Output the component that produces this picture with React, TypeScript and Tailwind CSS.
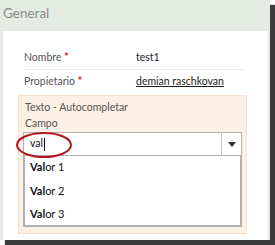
import React from "react";

const font = { fontFamily: 'Lato, "Open Sans", sans-serif' };

export default function App() {
  return (
    <div className="w-[275px] h-[245px] bg-white overflow-hidden" style={font}>
      <div className="w-[270px] h-[240px] bg-[#e4ebe3] shadow-[5px_5px_1px_#3c3c3c] flex flex-col">
        <div className="h-[31px] pl-[3px] pt-[4px] text-[13.5px] text-[#8c8c8c] leading-[18px]">General</div>
        <div className="flex-1 ml-[3px] mr-[2px] bg-white pt-[15px] flex flex-col">
          <div className="ml-[20px] w-[222px] flex flex-col text-[10.5px]">
            <div className="h-[24px] flex items-center border-b border-[#ececec]">
              <div className="w-[113px] pl-[1px] text-[#555]">
                Nombre <span className="text-[#e00] font-bold">*</span>
              </div>
              <div className="text-[#1e1e1e]">test1</div>
            </div>
            <div className="h-[24px] flex items-center">
              <div className="w-[113px] pl-[1px] text-[#555]">
                Propietario <span className="text-[#e00] font-bold">*</span>
              </div>
              <div className="text-[#1e1e1e] underline">demian raschkovan</div>
            </div>
          </div>
          <div className="ml-[15px] w-[229px] h-[139px] mt-[1px] bg-[#fcefe3] border border-[#f6dec7] px-[4px] pt-[3px] flex flex-col text-[10.5px]">
            <div className="pl-[2px] text-[#555] leading-[16px]">Texto - Autocompletar</div>
            <div className="pl-[2px] text-[#555] leading-[16px]">Campo</div>
            <div className="relative mt-[1px]">
              <div className="h-[24px] bg-white border border-[#b4b4b4] flex">
                <div className="flex-1 flex items-center pl-[6px] text-[#111]">
                  val<span className="inline-block w-[1px] h-[13px] bg-black ml-[1px]"></span>
                </div>
                <div className="w-[20px] border-l border-[#c8c8c8] flex items-center justify-center">
                  <svg width="8" height="5" viewBox="0 0 8 5">
                    <polygon points="0,0 8,0 4,5" fill="#333" />
                  </svg>
                </div>
              </div>
              <div className="h-[71px] bg-white border-2 border-t-0 border-[#b0b0b0] flex flex-col pl-[5px] text-[#111] text-[11px]">
                <div className="h-[24px] flex items-center"><span className="font-bold">Val</span>or 1</div>
                <div className="h-[24px] flex items-center"><span className="font-bold">Val</span>or 2</div>
                <div className="h-[23px] flex items-center"><span className="font-bold">Val</span>or 3</div>
              </div>
              <svg className="absolute left-[-8px] top-[-1px]" width="58" height="28" viewBox="0 0 58 28">
                <ellipse cx="29" cy="14" rx="27" ry="12" fill="none" stroke="#b3191f" strokeWidth="2" />
              </svg>
            </div>
          </div>
        </div>
      </div>
    </div>
  );
}
